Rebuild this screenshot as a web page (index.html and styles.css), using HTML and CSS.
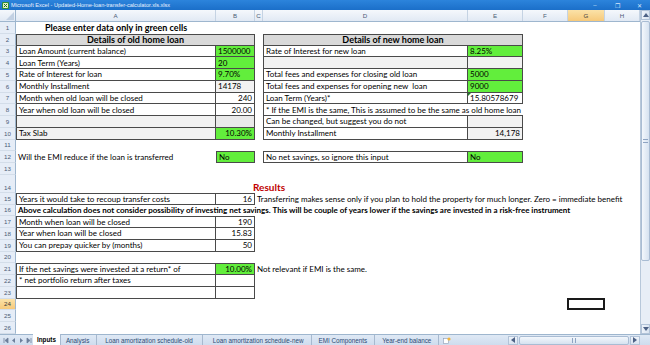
FILE: index.html
```html
<!DOCTYPE html>
<html>
<head>
<meta charset="utf-8">
<link rel="stylesheet" href="styles.css">
</head>
<body>
<div class="app">
  <div class="titlebar">
    <svg class="xlicon" width="7" height="7" viewBox="0 0 7 7"><rect x="0" y="0" width="7" height="7" rx="1" fill="#2f8f3a"/><rect x="1" y="1" width="5" height="5" fill="#e9f3c5"/><path d="M1.8 1.8 L5.2 5.2 M5.2 1.8 L1.8 5.2" stroke="#1f6e2a" stroke-width="1"/></svg>
    <span class="title">Microsoft Excel - Updated-Home-loan-transfer-calculator.xls.xlsx</span>
    <span class="winbtns"><span class="wb min">–</span><span class="wb">❐</span><span class="wb">✕</span></span>
  </div>
  <div class="sheet">
    <div class="grid">
      <div class="colhdr">
        <div class="corner"><svg width="8" height="8" viewBox="0 0 8 8"><path d="M8 0 L8 8 L0 8 Z" fill="#c3d1e3"/></svg></div>
        <div class="ch">A</div><div class="ch">B</div><div class="ch">C</div><div class="ch">D</div><div class="ch">E</div><div class="ch">F</div><div class="ch sel">G</div><div class="ch">H</div>
      </div>
      <div class="r"><div class="rh">1</div><div class="c A ctr bold big">Please enter data only in green cells</div></div>
      <div class="r"><div class="rh">2</div><div class="c AB ctr bold big hdr b bt bl">Details of old home loan</div><div class="c DE ctr bold big hdr b bt bl">Details of new home loan</div></div>
      <div class="r"><div class="rh">3</div><div class="c A b bl">Loan Amount (current balance)</div><div class="c B b grn">1500000</div><div class="c D b bl">Rate of Interest for new loan</div><div class="c E b grn">8.25%</div></div>
      <div class="r"><div class="rh">4</div><div class="c A b bl">Loan Term (Years)</div><div class="c B b grn">20</div><div class="c D b bl lg"></div><div class="c E b lg"></div></div>
      <div class="r"><div class="rh">5</div><div class="c A b bl">Rate of Interest for loan</div><div class="c B b grn">9.70%</div><div class="c D b bl">Total fees and expenses for closing old loan</div><div class="c E b grn">5000</div></div>
      <div class="r"><div class="rh">6</div><div class="c A b bl">Monthly Installment</div><div class="c B b lg">14178</div><div class="c D b bl">Total fees and expenses for opening new&nbsp; loan</div><div class="c E b grn">9000</div></div>
      <div class="r"><div class="rh">7</div><div class="c A b bl">Month when old loan will be closed</div><div class="c B b rt">240</div><div class="c D b bl">Loan Term (Years)*</div><div class="c E b mark">15.80578679</div></div>
      <div class="r"><div class="rh">8</div><div class="c A b bl">Year when old loan will be closed</div><div class="c B b rt">20.00</div><div class="c D bb bl">* If the EMI is the same, This is assumed to be the same as old home loan</div><div class="c E bb"></div></div>
      <div class="r"><div class="rh">9</div><div class="c A b bl lg"></div><div class="c B b lg2"></div><div class="c D b bl">Can be changed, but suggest you do not</div><div class="c E b lg"></div></div>
      <div class="r"><div class="rh">10</div><div class="c A b bl lg">Tax Slab</div><div class="c B b grn rt">10.30%</div><div class="c D b bl">Monthly Installment</div><div class="c E b lg rt">14,178</div></div>
      <div class="r"><div class="rh">11</div></div>
      <div class="r"><div class="rh">12</div><div class="c A">Will the EMI reduce if the loan is transferred</div><div class="c B b bt bl grn">No</div><div class="c D b bt bl">No net savings, so ignore this input</div><div class="c E b bt grn">No</div></div>
      <div class="r"><div class="rh">13</div></div>
      <div class="r tall"><div class="rh">14</div><div class="c C results">Results</div></div>
      <div class="r"><div class="rh">15</div><div class="c A b bt bl">Years it would take to recoup transfer costs</div><div class="c B b bt rt">16</div><div class="c C">Transferring makes sense only if you plan to hold the property for much longer. Zero = immediate benefit</div></div>
      <div class="r"><div class="rh">16</div><div class="c A bold">Above calculation does not consider possibility of investing net savings. This will be couple of years lower if the savings are invested in a risk-free instrument</div></div>
      <div class="r"><div class="rh">17</div><div class="c A b bt bl">Month when loan will be closed</div><div class="c B b bt rt">190</div></div>
      <div class="r"><div class="rh">18</div><div class="c A b bl">Year when loan will be closed</div><div class="c B b rt">15.83</div></div>
      <div class="r"><div class="rh">19</div><div class="c A b bl">You can prepay quicker by (months)</div><div class="c B b rt">50</div></div>
      <div class="r"><div class="rh">20</div></div>
      <div class="r"><div class="rh">21</div><div class="c A b bt bl">If the net savings were invested at a return* of</div><div class="c B b bt grn rt">10.00%</div><div class="c C">Not relevant if EMI is the same.</div></div>
      <div class="r"><div class="rh">22</div><div class="c A b bl">* net portfolio return after taxes</div><div class="c B b"></div></div>
      <div class="r"><div class="rh">23</div><div class="c A b bl"></div><div class="c B b"></div></div>
      <div class="r"><div class="rh sel">24</div><div class="c G selcell"></div></div>
      <div class="r"><div class="rh">25</div></div>
      <div class="r"><div class="rh">26</div></div>
    </div>
    <div class="vscroll">
      <div class="sbtn"><svg width="6" height="4" viewBox="0 0 6 4"><path d="M0 4 L3 0 L6 4 Z" fill="#4d6185"/></svg></div>
      <div class="vtrack"><div class="vthumb"><span class="grip"></span></div></div>
      <div class="sbtn"><svg width="6" height="4" viewBox="0 0 6 4"><path d="M0 0 L3 4 L6 0 Z" fill="#4d6185"/></svg></div>
    </div>
  </div>
  <div class="tabbar">
    <div class="navs">
      <svg width="30" height="7" viewBox="0 0 30 7"><path d="M1 1 V6 M5 1 L2 3.5 L5 6 Z" stroke="#6d7f9b" fill="#6d7f9b" stroke-width="0.8"/><path d="M12 1 L9 3.5 L12 6 Z" fill="#6d7f9b"/><path d="M17 1 L20 3.5 L17 6 Z" fill="#6d7f9b"/><path d="M24 1 L27 3.5 L24 6 Z M28 1 V6" stroke="#6d7f9b" fill="#6d7f9b" stroke-width="0.8"/></svg>
    </div>
    <div class="tabs">
      <span class="tab active">Inputs</span>
      <span class="tab t2">Analysis</span>
      <span class="tab t3">Loan amortization schedule-old</span>
      <span class="tab t4">Loan amortization schedule-new</span>
      <span class="tab t5">EMI Components</span>
      <span class="tab t6">Year-end balance</span>
      <span class="tab newtab"><svg width="8" height="7" viewBox="0 0 8 7"><rect x="0.5" y="1.5" width="5" height="5" fill="#fff" stroke="#8a9bb5" stroke-width="0.6"/><circle cx="6" cy="2" r="1.6" fill="#f0b540"/></svg></span>
    </div>
    <div class="hscroll">
      <div class="hbtn"><svg width="4" height="6" viewBox="0 0 4 6"><path d="M4 0 L0 3 L4 6 Z" fill="#4d6185"/></svg></div>
      <div class="htrack"><div class="hthumb"><span class="hgrip"></span></div></div>
      <div class="hbtn"><svg width="4" height="6" viewBox="0 0 4 6"><path d="M0 0 L4 3 L0 6 Z" fill="#4d6185"/></svg></div>
    </div>
  </div>
</div>
</body>
</html>
```
FILE: styles.css
```css
* { box-sizing: border-box; margin: 0; padding: 0; }
html, body { width: 650px; height: 345px; overflow: hidden; background: #fff; }
body { font-family: Lato, "Noto Sans", sans-serif; font-size: 8px; color: #000; }

.app { display: flex; flex-direction: column; width: 650px; height: 345px; }

.titlebar {
  height: 10px; flex: none;
  background: linear-gradient(#2c84dc, #1b6fc9);
  display: flex; align-items: center; color: #fff;
  font-family: "Liberation Sans", sans-serif; font-size: 5.6px;
  padding-left: 2px;
}
.xlicon { flex: none; margin-right: 2px; }
.title { color: #eaf2ff; }
.winbtns { margin-left: auto; display: flex; font-size: 6px; color: #d6e6fb; }
.wb { width: 22px; text-align: center; }

.sheet { display: flex; height: 324px; flex: none; }
.grid { width: 640px; display: flex; flex-direction: column; }

.colhdr, .r {
  display: grid;
  grid-template-columns: 16px 200px 39px 8px 205px 55px 45px 37px 35px;
}
.colhdr {
  height: 12px; flex: none;
  background: linear-gradient(#f5f8fc, #e1e9f4);
  border-bottom: 1px solid #9eb6ce;
}
.corner { border-right: 1px solid #9eb6ce; display: flex; align-items: flex-end; justify-content: flex-end; padding: 1px; }
.ch {
  border-right: 1px solid #c5d3e3;
  font-size: 6.2px; color: #4a5c76;
  display: flex; align-items: center; justify-content: center;
  font-family: "Liberation Sans", sans-serif;
}
.ch.sel { background: linear-gradient(#fbe2a8, #f6c97a); color: #3a3a3a; }

.r { height: 11.75px; flex: none; }
.r.tall { height: 18px; }
.rh {
  grid-column: 1;
  background: #e6edf7;
  border-right: 1px solid #9eb6ce;
  border-bottom: 1px solid #d3dde9;
  font-size: 6.2px; color: #4a5c76;
  font-family: "Liberation Sans", sans-serif;
  display: flex; align-items: center; justify-content: center;
}
.tall .rh { align-items: flex-end; padding-bottom: 1px; }
.rh.sel { background: linear-gradient(#fbe2a8, #f6c97a); color: #3a3a3a; }

.c {
  white-space: nowrap;
  padding: 0 2px;
  display: flex; align-items: center;
  line-height: 1;
  grid-row: 1;
}
.A { grid-column: 2; }
.B { grid-column: 3; }
.C { grid-column: 4; }
.D { grid-column: 5; }
.E { grid-column: 6; }
.G { grid-column: 8; }
.AB { grid-column: 2 / 4; }
.DE { grid-column: 5 / 7; }

.ctr { justify-content: center; }
.rt { justify-content: flex-end; }
.bold { font-weight: 700; }
.big { font-size: 9px; }
.hdr { background: #d9d9d9; }
.lg { background: #f2f2f2; }
.lg2 { background: #e9e9e9; }
.grn { background: #62ee3c; }

.b { border-right: 1px solid #4a4a4a; border-bottom: 1px solid #4a4a4a; }
.bb { border-bottom: 1px solid #4a4a4a; }
.bt { border-top: 1px solid #4a4a4a; }
.bl { border-left: 1px solid #4a4a4a; }

.mark { position: relative; }
.mark::before {
  content: ""; position: absolute; left: 0; top: 0;
  border-top: 3px solid #1f7a2a; border-right: 3px solid transparent;
}

.results {
  color: #c00000; font-weight: 700; font-size: 10px;
  align-items: flex-end; padding: 0 0 1px 0; margin-left: -2px;
}

.selcell { border: 2px solid #1a1a1a; margin: -1px 0 0 -1px; }

.vscroll {
  width: 10px; display: flex; flex-direction: column;
  background: #e8eef6; border-left: 1px solid #b8c8da;
}
.sbtn { height: 10px; display: flex; align-items: center; justify-content: center; background: linear-gradient(90deg, #eef3fa, #d8e3f0); border: 1px solid #b2c3d8; }
.vtrack { flex: 1; padding: 1px 0; }
.vthumb {
  height: 240px; background: linear-gradient(90deg, #f3f7fc, #d6e2f0);
  border: 1px solid #a9bcd3; border-radius: 2px;
  display: flex; align-items: center; justify-content: center;
}
.grip { width: 5px; height: 4px; border-top: 1px solid #8ea4c2; border-bottom: 1px solid #8ea4c2; }

.tabbar {
  height: 11px; flex: none; display: flex; align-items: stretch;
  background: linear-gradient(#dfe9f5, #cedcee);
  border-top: 1px solid #9eb6ce;
  font-family: "Liberation Sans", sans-serif;
}
.navs { width: 33px; display: flex; align-items: center; padding-left: 3px; }
.tabs { display: flex; align-items: stretch; width: 475px; }
.tab {
  font-size: 6.3px; color: #2d4a72;
  display: flex; align-items: center;
  padding: 0 7px;
  border-right: 1px solid #a7b9cf;
}
.tab.active { background: #fff; font-weight: 700; color: #000; padding: 0 4px; margin-top: -1px; }
.t2 { padding-left: 5px; }
.t3 { padding-left: 8px; padding-right: 9px; }
.t4 { padding-left: 10px; }
.newtab { padding: 0 4px; border-right: none; }
.hscroll { width: 132px; display: flex; align-items: center; padding: 1px 0; }
.hbtn { width: 10px; height: 9px; display: flex; align-items: center; justify-content: center; background: linear-gradient(#eef3fa, #d8e3f0); border: 1px solid #b2c3d8; }
.htrack { flex: 1; height: 9px; padding: 0 1px; }
.hthumb { height: 9px; background: linear-gradient(#f3f7fc, #d6e2f0); border: 1px solid #a9bcd3; border-radius: 2px; display: flex; align-items: center; justify-content: center; }
.hgrip { width: 4px; height: 5px; border-left: 1px solid #8ea4c2; border-right: 1px solid #8ea4c2; }
```
